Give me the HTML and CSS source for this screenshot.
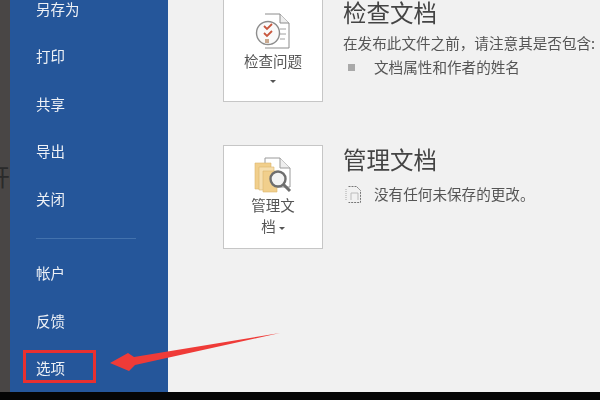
FILE: index.html
```html
<!DOCTYPE html>
<html lang="zh-CN">
<head>
<meta charset="utf-8">
<title>信息</title>
<link rel="stylesheet" href="styles.css">
</head>
<body>
<div class="app">
  <div class="window">
    <div class="strip"><span class="strip-char">开</span></div>
    <nav class="nav">
      <div class="nav-item">另存为</div>
      <div class="nav-item">打印</div>
      <div class="nav-item">共享</div>
      <div class="nav-item">导出</div>
      <div class="nav-item">关闭</div>
      <div class="nav-rule"></div>
      <div class="nav-item">帐户</div>
      <div class="nav-item">反馈</div>
      <div class="nav-item">选项</div>
    </nav>
    <main class="main">
      <section class="row row-first">
        <div class="card card-cut">
          <svg class="card-icon" width="36" height="38" viewBox="0 0 36 38">
            <path d="M10 1H25L34 10V35H10" fill="#fff" stroke="#8c8c8c"/>
            <path d="M25 1V10H34" fill="#eee" stroke="#8c8c8c"/>
            <path d="M25 16H31M25 21H31M25 26H30" stroke="#a0a0a0"/>
            <circle cx="13" cy="20" r="11.5" fill="#fafafa" stroke="#8c8c8c" stroke-width="1.4"/>
            <path d="M9 13l3 3 5-5M9 20l3 3 5-5" fill="none" stroke="#c8573e" stroke-width="1.8"/>
            <rect x="10" y="26" width="4" height="4" fill="#c9a98f"/>
          </svg>
          <div class="card-label">检查问题</div>
          <div class="card-label"><span class="caret"></span></div>
        </div>
        <div class="info">
          <h2 class="title">检查文档</h2>
          <p class="desc">在发布此文件之前，请注意其是否包含:</p>
          <div class="bullet"><span class="square"></span><span>文档属性和作者的姓名</span></div>
        </div>
      </section>
      <section class="row">
        <div class="card">
          <svg class="card-icon" width="38" height="38" viewBox="0 0 38 38">
            <path d="M11 1H26L36 11V30H11Z" fill="#fff" stroke="#9a9a9a"/>
            <path d="M26 1V11H36" fill="#eee" stroke="#9a9a9a"/>
            <path d="M1 6H17V32H1Z" fill="#f1cf8c" stroke="#dcb56c" stroke-width=".6"/>
            <path d="M5 10H20V33H5Z" fill="#f6deae" stroke="#dcb56c" stroke-width=".6"/>
            <path d="M9 14H23V35H9Z" fill="#f1cf8c" stroke="#dcb56c" stroke-width=".6"/>
            <circle cx="24" cy="22" r="7.5" fill="#f3f3f3" stroke="#6e6e6e" stroke-width="2.4"/>
            <path d="M29.5 27.5L36 34" stroke="#6e6e6e" stroke-width="3"/>
          </svg>
          <div class="card-label">管理文</div>
          <div class="card-label">档 <span class="caret"></span></div>
        </div>
        <div class="info">
          <h2 class="title">管理文档</h2>
          <div class="note">
            <svg width="20" height="20" viewBox="0 0 20 20">
              <path d="M5.500 2.500H13.500L17.500 6.500V18.500H5.500" fill="none" stroke="#777" stroke-dasharray="2 1"/>
              <path d="M3 5V17" stroke="#aaa" stroke-dasharray="1 1"/>
              <path d="M8 9H15V16M8 9V16" fill="none" stroke="#bbb"/>
            </svg>
            <span>没有任何未保存的更改。</span>
          </div>
        </div>
      </section>
    </main>
  </div>
  <div class="bottom"></div>
  <div class="highlight"></div>
  <svg class="arrow" width="175" height="42" viewBox="0 0 175 42">
    <path d="M0 31L18 21L24 25L170 1L25 33L19 39Z" fill="#ef3b38"/>
  </svg>
</div>
</body>
</html>
```

FILE: styles.css
```css
* {
  box-sizing: border-box;
}
html, body {
  margin: 0;
  padding: 0;
}
body {
  width: 600px;
  height: 400px;
  overflow: hidden;
  background: #000;
  font-family: "Noto Sans CJK SC", "Liberation Sans", sans-serif;
}
.app {
  position: relative;
  width: 600px;
  height: 400px;
  display: flex;
  flex-direction: column;
  background: #000;
  filter: blur(0.4px);
}
.window {
  flex: 1;
  display: flex;
  min-height: 0;
}
.bottom {
  height: 8px;
  background: #050505;
}
.strip {
  width: 10px;
  background: #494645;
  overflow: hidden;
  padding-top: 160px;
}
.strip-char {
  display: block;
  width: 24px;
  margin-left: -14px;
  font-size: 24px;
  line-height: 32px;
  color: #2a2a2a;
}
.nav {
  width: 158px;
  background: #25569a;
  padding-left: 26px;
  display: flex;
  flex-direction: column;
}
.nav-item {
  height: 47.5px;
  flex: none;
  padding-top: 11px;
  line-height: 24px;
  font-size: 14.5px;
  color: #eef1f6;
}
.nav-item:first-child {
  height: 33px;
  padding-top: 0;
  line-height: 18px;
}
.nav-rule {
  width: 100px;
  height: 1px;
  background: #4372ad;
  margin-top: 15px;
  margin-bottom: 11px;
  flex: none;
}
.main {
  flex: 1;
  background: #f1f1f1;
  padding-left: 55px;
  color: #444;
}
.row {
  display: flex;
  align-items: flex-start;
  gap: 20px;
}
.row-first {
  margin-bottom: 43px;
}
.card {
  width: 100px;
  height: 104px;
  border: 1px solid #c6c6c6;
  background: #fff;
  display: flex;
  flex-direction: column;
  align-items: center;
  padding-top: 11px;
  flex: none;
}
.card-cut {
  height: 102px;
  border-top: 0;
  padding-top: 13px;
}
.card-icon {
  flex: none;
  margin-bottom: -1px;
}
.card-label {
  font-size: 14.5px;
  line-height: 21px;
  color: #555;
  height: 21px;
}
.card-cut .card-label + .card-label {
  line-height: 16px;
  height: 16px;
}
.caret {
  display: inline-block;
  width: 0;
  height: 0;
  border-left: 3px solid transparent;
  border-right: 3px solid transparent;
  border-top: 3px solid #555;
  vertical-align: middle;
}
.info {
  flex: 1;
  min-width: 0;
}
.title {
  margin: 0;
  font-size: 23.5px;
  font-weight: 400;
  line-height: 24px;
  color: #444;
}
.row-first .title {
  margin-bottom: 10px;
}
.row:not(.row-first) .title {
  line-height: 28px;
}
.desc {
  margin: 0;
  font-size: 14.6px;
  line-height: 18px;
  color: #555;
  white-space: nowrap;
}
.bullet {
  display: flex;
  align-items: center;
  margin-top: 6px;
  font-size: 14.6px;
  line-height: 18px;
  color: #555;
}
.square {
  width: 7px;
  height: 7px;
  background: #a9a9a9;
  margin-left: 5px;
  margin-right: 19px;
  flex: none;
}
.note {
  display: flex;
  align-items: center;
  gap: 11px;
  margin-top: 11px;
  font-size: 14.6px;
  line-height: 20px;
  color: #555;
}
.highlight {
  position: absolute;
  left: 23px;
  top: 350px;
  width: 73px;
  height: 33px;
  border: 3px solid #e9302f;
}
.arrow {
  position: absolute;
  left: 110px;
  top: 332px;
}
```
